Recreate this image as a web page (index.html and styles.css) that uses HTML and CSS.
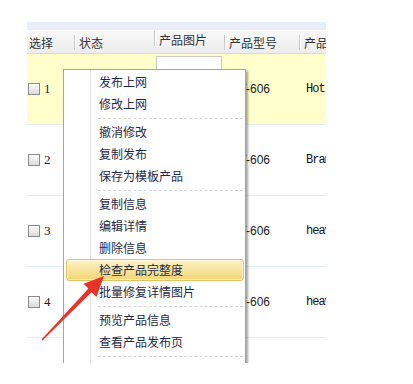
FILE: index.html
```html
<!DOCTYPE html>
<html lang="zh">
<head>
    <meta charset="UTF-8">
    <title>产品列表</title>
    <link rel="stylesheet" href="styles.css">
</head>
<body>
    <div class="grid">
        <div class="topband"></div>
        <div class="head">
            <div class="hcell c1">选择</div>
            <div class="hcell c2"><span class="sep"></span>状态</div>
            <div class="hcell c3"><span class="sep"></span>产品图片</div>
            <div class="hcell c4"><span class="sep"></span>产品型号</div>
            <div class="hcell c5"><span class="sep"></span>产品名称</div>
        </div>
        <div class="row selected">
            <div class="cell c1"><span class="check"></span><span class="num">1</span></div>
            <div class="cell c2"></div>
            <div class="cell c3"><div class="pic"></div></div>
            <div class="cell c4 model">GT-606</div>
            <div class="cell c5 name">Hot sale</div>
        </div>
        <div class="row">
            <div class="cell c1"><span class="check"></span><span class="num">2</span></div>
            <div class="cell c2"></div>
            <div class="cell c3"><div class="pic"></div></div>
            <div class="cell c4 model">GT-606</div>
            <div class="cell c5 name">Brand new</div>
        </div>
        <div class="row">
            <div class="cell c1"><span class="check"></span><span class="num">3</span></div>
            <div class="cell c2"></div>
            <div class="cell c3"><div class="pic"></div></div>
            <div class="cell c4 model">GT-606</div>
            <div class="cell c5 name">heavy duty</div>
        </div>
        <div class="row">
            <div class="cell c1"><span class="check"></span><span class="num">4</span></div>
            <div class="cell c2"></div>
            <div class="cell c3"><div class="pic"></div></div>
            <div class="cell c4 model">GT-606</div>
            <div class="cell c5 name">heavy duty</div>
        </div>
        <div class="row"></div>

        <!-- 右键菜单 -->
        <ul class="menu">
            <li class="item">发布上网</li>
            <li class="item">修改上网</li>
            <li class="divider"></li>
            <li class="item">撤消修改</li>
            <li class="item">复制发布</li>
            <li class="item">保存为模板产品</li>
            <li class="divider"></li>
            <li class="item">复制信息</li>
            <li class="item">编辑详情</li>
            <li class="item">删除信息</li>
            <li class="item active">检查产品完整度</li>
            <li class="item">批量修复详情图片</li>
            <li class="divider"></li>
            <li class="item">预览产品信息</li>
            <li class="item">查看产品发布页</li>
            <li class="divider"></li>
            <li class="item last">发布日志</li>
        </ul>
    </div>

    <svg class="arrow" width="413" height="384" viewBox="0 0 413 384">
        <polygon fill="#e5352a" points="41.5,339.5 42.5,340.5 91.6,292.2 96.5,297 104,276 83.5,283.8 88.4,288.6"/>
    </svg>
</body>
</html>
```

FILE: styles.css
```css
body {
    margin: 0;
    padding: 22px 0 0 27px;
    background: #fff;
    font-family: "Noto Sans CJK SC", sans-serif;
    font-size: 12px;
    color: #222;
}
.grid {
    position: relative;
    width: 299px;
    height: 341px;
    overflow: hidden;
}
.topband {
    height: 8px;
    background: #e9eff8;
}
.head {
    display: flex;
    height: 24px;
    box-sizing: border-box;
    background: linear-gradient(#f9f9f9, #ececec);
    border-top: 1px solid #fdfdfd;
    border-bottom: 1px solid #d6d9dd;
    color: #333;
}
.hcell {
    display: flex;
    align-items: center;
    white-space: nowrap;
}
.sep {
    width: 1px;
    height: 15px;
    background: #c9c9c9;
    border-right: 1px solid #fff;
    margin-right: 3px;
}
.c1 { width: 47px; flex: none; }
.c2 { width: 80px; flex: none; }
.c3 { width: 70px; flex: none; }
.c4 { width: 75px; flex: none; }
.c5 { width: 80px; flex: none; }
.head .c1 { padding-left: 2px; box-sizing: border-box; }
.row {
    display: flex;
    height: 71px;
    border-bottom: 1px solid #e1eff5;
    box-sizing: border-box;
}
.row.selected {
    background: #ffffcc;
}
.cell {
    display: flex;
    align-items: center;
    white-space: nowrap;
    overflow: hidden;
}
.check {
    width: 10px;
    height: 10px;
    margin-left: 1px;
    border: 1px solid #8c8c8c;
    background: linear-gradient(#fdfdfd, #dadada);
}
.num {
    margin-left: 4px;
    font-family: "Liberation Serif", serif;
    font-size: 13px;
}
.c3 {
    align-items: flex-start;
}
.pic {
    width: 64px;
    height: 62px;
    margin: 2px 0 0 2px;
    background: #fff;
    border: 1px solid #c9c9c9;
}
.model {
    padding-left: 6px;
    font-family: "Liberation Sans", sans-serif;
    font-size: 12px;
}
.name {
    padding-left: 1px;
    box-sizing: border-box;
    font-family: "Liberation Mono", monospace;
    font-size: 12px;
    letter-spacing: -1px;
    color: #111;
}
.menu {
    position: absolute;
    left: 36px;
    top: 47px;
    width: 183px;
    margin: 0;
    padding: 1px 0;
    list-style: none;
    box-sizing: border-box;
    background: #fff linear-gradient(to right, transparent 26px, #e3e3e3 26px, #e3e3e3 27px, transparent 27px);
    border: 1px solid #a5a5a5;
    box-shadow: 2px 2px 2px rgba(0, 0, 0, 0.35);
    color: #1f2946;
}
.item {
    height: 22px;
    line-height: 22px;
    padding-left: 35px;
    white-space: nowrap;
}
.item.active {
    height: 20px;
    margin: 0 1px 0 2px;
    padding-left: 32px;
    line-height: 20px;
    border: 1px solid #e4c25f;
    border-radius: 3px;
    background: linear-gradient(#fdf3c6, #f7e39d 50%, #f2d474);
    box-shadow: inset 0 0 0 1px rgba(255, 255, 255, 0.5);
}
.item.last {
    line-height: 16px;
    padding-top: 3px;
}
.divider {
    height: 3px;
    margin: 0 2px 2px 34px;
    border-bottom: 1px dashed #d4d4d4;
}
.arrow {
    position: absolute;
    left: 0;
    top: 0;
    pointer-events: none;
}
```
